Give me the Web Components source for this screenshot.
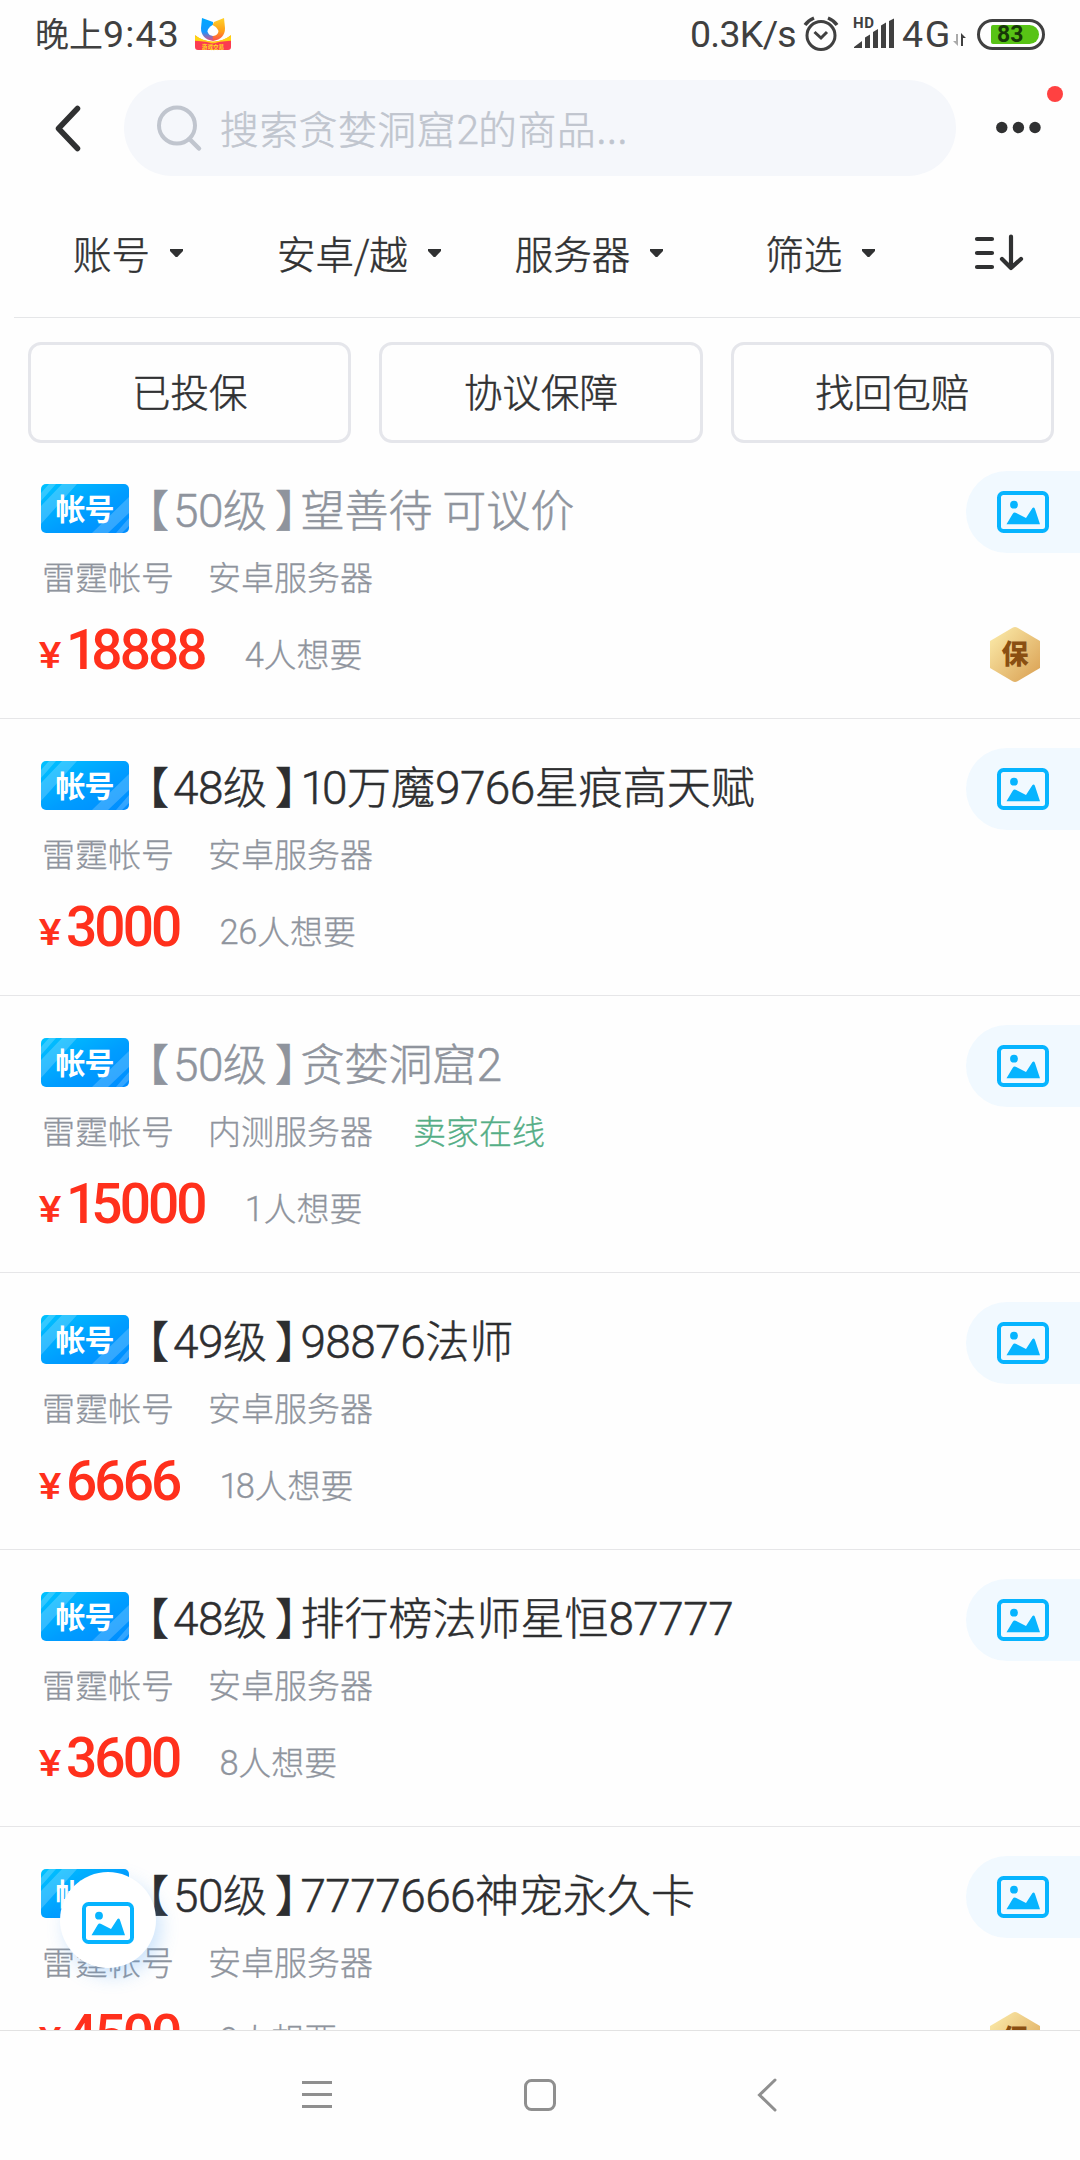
<!DOCTYPE html>
<html lang="zh-CN">
<head>
<meta charset="utf-8">
<title>贪婪洞窟2</title>
<style>
html,body{margin:0;padding:0}
body{width:1080px;height:2160px;overflow:hidden;background:#fefefe;color:#303132;font-family:"Noto Sans CJK SC",sans-serif;font-weight:300}
</style>
</head>
<body>
<market-app></market-app>
<script>
const define=(name,html,hook)=>customElements.define(name,class extends HTMLElement{
  connectedCallback(){
    if(this.shadowRoot)return;
    const root=this.attachShadow({mode:'open'});
    root.innerHTML=typeof html==='function'?html(this):html;
    if(hook)hook(this,root);
  }
});

/* Digits are set in Roboto, a little larger than the Chinese text around them. */
const mix=s=>s.replace(/\d+/g,m=>`<span style="font-family:Roboto,sans-serif;font-size:1.045em;line-height:1px;letter-spacing:-.012em">${m.replace(/^1(?=\d)/,'<span style="letter-spacing:-.085em">1</span>')}</span>`);

/* Text run whose letter spacing is adjusted so that it spans a given width. */
define('fit-text',`<style>:host{display:inline-block;white-space:pre}span{display:inline-block}</style><span><slot></slot></span>`,(el,root)=>{
  const s=root.querySelector('span'),w=+el.getAttribute('w');
  if(!w)return;
  const n=[...el.textContent].length;
  s.style.letterSpacing=(w-s.getBoundingClientRect().width)/n+'px';
});

define('picture-icon',`<style>:host{display:block;width:52px;height:42px}svg{display:block}</style><svg width="52" height="42" viewBox="0 0 52 42"><rect x="2" y="2" width="48" height="38" rx="4.500" fill="none" stroke="#06b4ff" stroke-width="4"/><circle cx="17" cy="13.700" r="3.900" fill="#06b4ff"/><path d="M9.500 33.300L15.600 23Q17 20.800 19.200 21.900L29 27L35.300 17.300Q36.800 15.500 37.900 17.800L43 33.300Z" fill="#06b4ff"/></svg>`);

define('status-bar',`<style>
:host{display:flex;align-items:center;height:68px;padding:0 35px 0 35px;color:#404040;font-weight:400}
.time{font-size:34px;line-height:50px;margin-top:-2px}
.lat{font-family:Roboto,sans-serif;font-size:37.500px;line-height:50px}
.sp{flex:1}svg{display:block}
.logo{margin-left:15px}
.sig{position:relative;width:42px;height:34px;margin-left:14px}
.sig b{position:absolute;left:0;top:-1px;font:700 15px/15px Roboto,sans-serif;letter-spacing:.6px}
.bat{box-sizing:border-box;width:68px;height:31px;border:3px solid #404040;border-radius:16px;margin-left:10px;padding:3px 3px 3px 11px}
.bat div{background:#58c315;height:19px;border-radius:2px 10px 10px 2px;font:700 23px/20px Roboto,sans-serif;color:#173808;padding-left:6px}
</style>
<span class="time">晚上</span><fit-text class="lat" w="77">9:43</fit-text>
<svg class="logo" width="36" height="34" viewBox="0 0 36 34">
<defs><linearGradient id="y" x1="0" y1="0" x2="0" y2="1"><stop offset="0" stop-color="#ffd22a"/><stop offset=".6" stop-color="#ff9c16"/><stop offset="1" stop-color="#ff4a50"/></linearGradient><linearGradient id="b" x1="0" y1="0" x2="0" y2="1"><stop offset="0" stop-color="#00a8ff"/><stop offset=".6" stop-color="#1598ff"/><stop offset="1" stop-color="#ef4a76"/></linearGradient></defs>
<path d="M7 1L18 5L18 24Q6 22 6 11Z" fill="url(#b)"/><path d="M29 1L19 5L17 9L18 24Q30 22 30 11Z" fill="url(#y)"/><path d="M17.500 8Q12.500 11 12.500 14.500Q13.500 18.500 18 19Q23 18.500 23.500 14Q22 10 17.500 8Z" fill="#fff"/>
<path d="M0 18Q7 24 18 24.500Q29 24 36 18V27H0Z" fill="#ffb80d"/><path d="M0 19Q9 24 18 25.500Q27 24 36 19V23Q26 26 18 27Q10 26 0 23Z" fill="#ffd313"/>
<path d="M0 24Q10 23.500 18 26.500Q26 23.500 36 24V30Q36 33 33 33H3Q0 33 0 30Z" fill="#fb3c50"/>
<text x="18" y="31.500" font-size="5.600" font-weight="700" fill="#ffdb1f" text-anchor="middle" font-family="Noto Sans CJK SC">游戏交易</text></svg>
<div class="sp"></div>
<fit-text class="lat" w="106">0.3K/s</fit-text>
<svg width="36" height="36" viewBox="0 0 36 36" style="margin-left:7px" fill="none" stroke="#404040" stroke-width="3"><circle cx="18" cy="19.500" r="14"/><path d="M11.500 16L18 22L24 16"/><path d="M2 9Q5 4.500 11 2M34 9Q31 4.500 25 2" stroke-width="3.400"/></svg>
<div class="sig"><b>HD</b><svg width="42" height="34" viewBox="0 0 42 34" fill="#404040"><path d="M1 31V30L9 24V31ZM12 31V20.500L17 17.500V31ZM20 31V15L25 12V31ZM28 31V8.500L33 5.500V31ZM36 31V4L41 1.500V31Z"/></svg></div>
<fit-text class="lat" w="50" style="margin-left:7px">4G</fit-text>
<svg width="14" height="14" viewBox="0 0 14 14" style="margin:12px 0 0 1px"><path d="M5 1V13L0 8H3V1Z" fill="#aaa"/><path d="M8 13V0L13 5H10V13Z" fill="#404040"/></svg>
<div class="bat"><div>83</div></div>`);

define('search-header',`<style>
:host{display:flex;align-items:center;height:120px;position:relative}
svg{display:block}
.back{margin-left:54px}
.pill{box-sizing:border-box;width:832px;height:96px;border-radius:48px;background:#f5f7fb;margin-left:42px;display:flex;align-items:center;padding-left:32px;color:#c0c5ce;font-size:38.500px;-webkit-text-stroke:.5px #c0c5ce}
.pill fit-text{margin:-3px 0 0 17px}
.more{margin-left:39px}
i{position:absolute;left:1047px;top:18px;width:16px;height:16px;border-radius:50%;background:#ff4141}
</style>
<svg class="back" width="28" height="48" viewBox="0 0 28 48" fill="none" stroke="#303132" stroke-width="5.500" stroke-linecap="round" stroke-linejoin="round"><path d="M23.500 4.500L4.500 24.500L23.500 44.500"/></svg>
<div class="pill"><svg width="47" height="47" viewBox="0 0 47 47" fill="none" stroke="#c0c5ce" stroke-width="4"><circle cx="21" cy="20.500" r="18"/><path d="M33.500 34L43 43.500" stroke-width="4.500" stroke-linecap="round"/></svg><fit-text w="409">搜索贪婪洞窟${mix('2')}的商品...</fit-text></div>
<svg class="more" width="46" height="14" viewBox="0 0 46 14" fill="#303132"><circle cx="6.800" cy="6.500" r="5.700"/><circle cx="23.400" cy="6.500" r="5.700"/><circle cx="40" cy="6.500" r="5.700"/></svg><i></i>`);

define('filter-item',`<style>:host{display:flex;align-items:center;font-size:38.500px;line-height:56px;margin-top:-1px;white-space:nowrap;-webkit-text-stroke:.5px #303132}svg{margin-left:20px;margin-top:1px;display:block}</style><slot></slot><svg width="13" height="8" viewBox="0 0 13 8"><path d="M0 0H13V2L7.300 8H5.700L0 2Z" fill="#303132"/></svg>`);

define('filter-bar',`<style>
:host{display:flex;align-items:center;height:129px;margin-left:14px;border-bottom:1px solid #e5e6e8;box-sizing:content-box}
filter-item:nth-of-type(1){margin-left:59px}filter-item:nth-of-type(2){margin-left:94px}filter-item:nth-of-type(3){margin-left:74px}filter-item:nth-of-type(4){margin-left:102px}
.sort{margin-left:99px;margin-top:-1px}
</style>
<filter-item>账号</filter-item><filter-item>安卓/越</filter-item><filter-item>服务器</filter-item><filter-item>筛选</filter-item>
<svg class="sort" width="50" height="38" viewBox="0 0 50 38" fill="none" stroke="#303132" stroke-width="4.200" stroke-linecap="round" stroke-linejoin="round"><path d="M3 6H18M3 20H18M3 34H18M37 3.500V34.500M28 26L37 35L47 26"/></svg>`);

define('tag-button',`<style>:host{box-sizing:border-box;display:flex;align-items:center;justify-content:center;flex:1;height:101px;border:3px solid #e5e6eb;border-radius:13px;font-size:38.500px;padding-bottom:6px;-webkit-text-stroke:.5px #303132}</style><slot></slot>`);
define('tag-row',`<style>:host{display:flex;gap:28px;padding:24px 26px 0 28px;height:100px}</style><tag-button>已投保</tag-button><tag-button>协议保障</tag-button><tag-button>找回包赔</tag-button>`);

define('account-badge',`<style>:host{display:block;width:88px;height:49px;white-space:normal}svg{display:block}</style><svg width="88" height="49" viewBox="0 0 88 49"><defs><linearGradient id="g" x1="0" y1="0" x2="1" y2="1"><stop offset="0" stop-color="#00c3ff"/><stop offset=".55" stop-color="#009dff"/><stop offset="1" stop-color="#008cff"/></linearGradient><clipPath id="c"><rect width="88" height="49" rx="5"/></clipPath></defs>
<g clip-path="url(#c)"><rect width="88" height="49" fill="url(#g)"/><path d="M8 0H15L0 17V9ZM21 0H36L0 40V22ZM88 13V29L67 49H51ZM88 34V42L81 49H75Z" fill="#fff" opacity=".2"/></g>
<text x="14.500" y="35.500" font-family="Noto Sans CJK SC" font-weight="700" font-size="30" textLength="59" fill="#fff">帐号</text></svg>`);

define('guarantee-badge',`<style>:host{display:block;width:50px;height:55px}svg{display:block}</style><svg width="50" height="55" viewBox="0 0 50 55"><defs><linearGradient id="g" x1="0" y1="0" x2="1" y2="1"><stop offset=".1" stop-color="#f9e6a4"/><stop offset="1" stop-color="#d99e50"/></linearGradient></defs><path d="M22.500 .8Q25 -.6 27.500 .8L50 14V41L27.500 54.200Q25 55.600 22.500 54.200L0 41V14Z" fill="url(#g)"/><text x="25" y="37" text-anchor="middle" font-family="Noto Sans CJK SC" font-weight="900" font-size="27" fill="#8a4f12">保</text></svg>`);

define('goods-item',el=>{
  const a=n=>el.getAttribute(n)||'';
  return `<style>
:host{display:block;box-sizing:border-box;height:277px;border-bottom:1px solid #e6e6e8;padding:42px 0 0 41px;position:relative}
.title{display:flex;align-items:center;height:49px;font-size:44px;line-height:49px;white-space:pre;color:${el.hasAttribute('seen')?'#8f949d':'#2d2e30'};-webkit-text-stroke:.5px currentColor}
.l,.r{font-feature-settings:"halt"}
.l{margin:0 4px 0 18px}.r{margin:0 3.500px 0 8px}
.sub{display:flex;font-size:33px;line-height:48px;color:#8f949d;margin:19px 0 0 1px;gap:34px;-webkit-text-stroke:.3px currentColor}
.on{color:#55ae86;margin-left:6px}
.pay{display:flex;align-items:baseline;margin:19px 0 0 -6px;color:#ff301c;line-height:62px;font-weight:500;font-family:Roboto,sans-serif}
.yen{font-size:37px;width:30px;text-align:center;transform:translateY(-1px) scaleX(1.150)}
.num{font-size:55px;letter-spacing:-2.900px;margin-left:1px}
.one{letter-spacing:-6px}
.want{font:300 33px/62px "Noto Sans CJK SC",sans-serif;color:#8f949d;margin-left:40px;-webkit-text-stroke:.3px currentColor;position:relative;top:-2px}
.pic{position:absolute;right:0;top:29px;width:114px;height:82px;box-sizing:border-box;border-radius:41px 0 0 41px;background:#f1f9ff;padding:20px 0 0 31px}
guarantee-badge{position:absolute;left:990px;top:185px}
</style>
<div class="title"><account-badge></account-badge><span class="l">【</span><span>${mix(a('level'))}级</span><span class="r">】</span><span>${mix(a('name'))}</span></div>
<div class="sub"><span>雷霆帐号</span><span>${a('server')}</span>${el.hasAttribute('online')?'<span class="on">卖家在线</span>':''}</div>
<div class="pay"><span class="yen">¥</span><span class="num">${a('price').replace(/^1/,'<span class="one">1</span>')}</span><span class="want">${mix(a('want'))}人想要</span></div>
<div class="pic"><picture-icon></picture-icon></div>${el.hasAttribute('safe')?'<guarantee-badge></guarantee-badge>':''}`;
});

define('goods-list',`<style>:host{display:block;height:1588px;overflow:hidden}</style>
<goods-item seen safe level="50" name="望善待 可议价" server="安卓服务器" price="18888" want="4"></goods-item>
<goods-item level="48" name="10万魔9766星痕高天赋" server="安卓服务器" price="3000" want="26"></goods-item>
<goods-item seen online level="50" name="贪婪洞窟2" server="内测服务器" price="15000" want="1"></goods-item>
<goods-item level="49" name="98876法师" server="安卓服务器" price="6666" want="18"></goods-item>
<goods-item level="48" name="排行榜法师星恒87777" server="安卓服务器" price="3600" want="8"></goods-item>
<goods-item safe level="50" name="7777666神宠永久卡" server="安卓服务器" price="4500" want="9"></goods-item>`);

define('float-button',`<style>:host{position:absolute;left:60px;top:1872px;width:96px;height:96px;box-sizing:border-box;padding-top:5px;border-radius:50%;background:#fff;box-shadow:5px 8px 18px rgba(80,160,245,.28);display:flex;align-items:center;justify-content:center}</style><picture-icon></picture-icon>`);

define('nav-bar',`<style>:host{display:flex;height:127px;padding-bottom:2px;border-top:1px solid #e2e2e2;align-items:center}svg{display:block}</style>
<svg width="1080" height="40" viewBox="0 0 1080 40" fill="none" stroke="#8f8f8f" stroke-width="3"><path d="M302 7.500H332M302 19.500H332M302 31.500H332"/><rect x="525.500" y="5.500" width="29" height="29" rx="6"/><path d="M775 5L759.500 20L775 35" stroke-linecap="round"/></svg>`);

define('market-app',`<style>:host{display:flex;flex-direction:column;width:1080px;height:2160px;position:relative}
status-bar,search-header,filter-bar,tag-row,goods-list,nav-bar{flex:none}</style>
<status-bar></status-bar><search-header></search-header><filter-bar></filter-bar><tag-row></tag-row><goods-list></goods-list><nav-bar></nav-bar><float-button></float-button>`);
</script>
</body>
</html>
